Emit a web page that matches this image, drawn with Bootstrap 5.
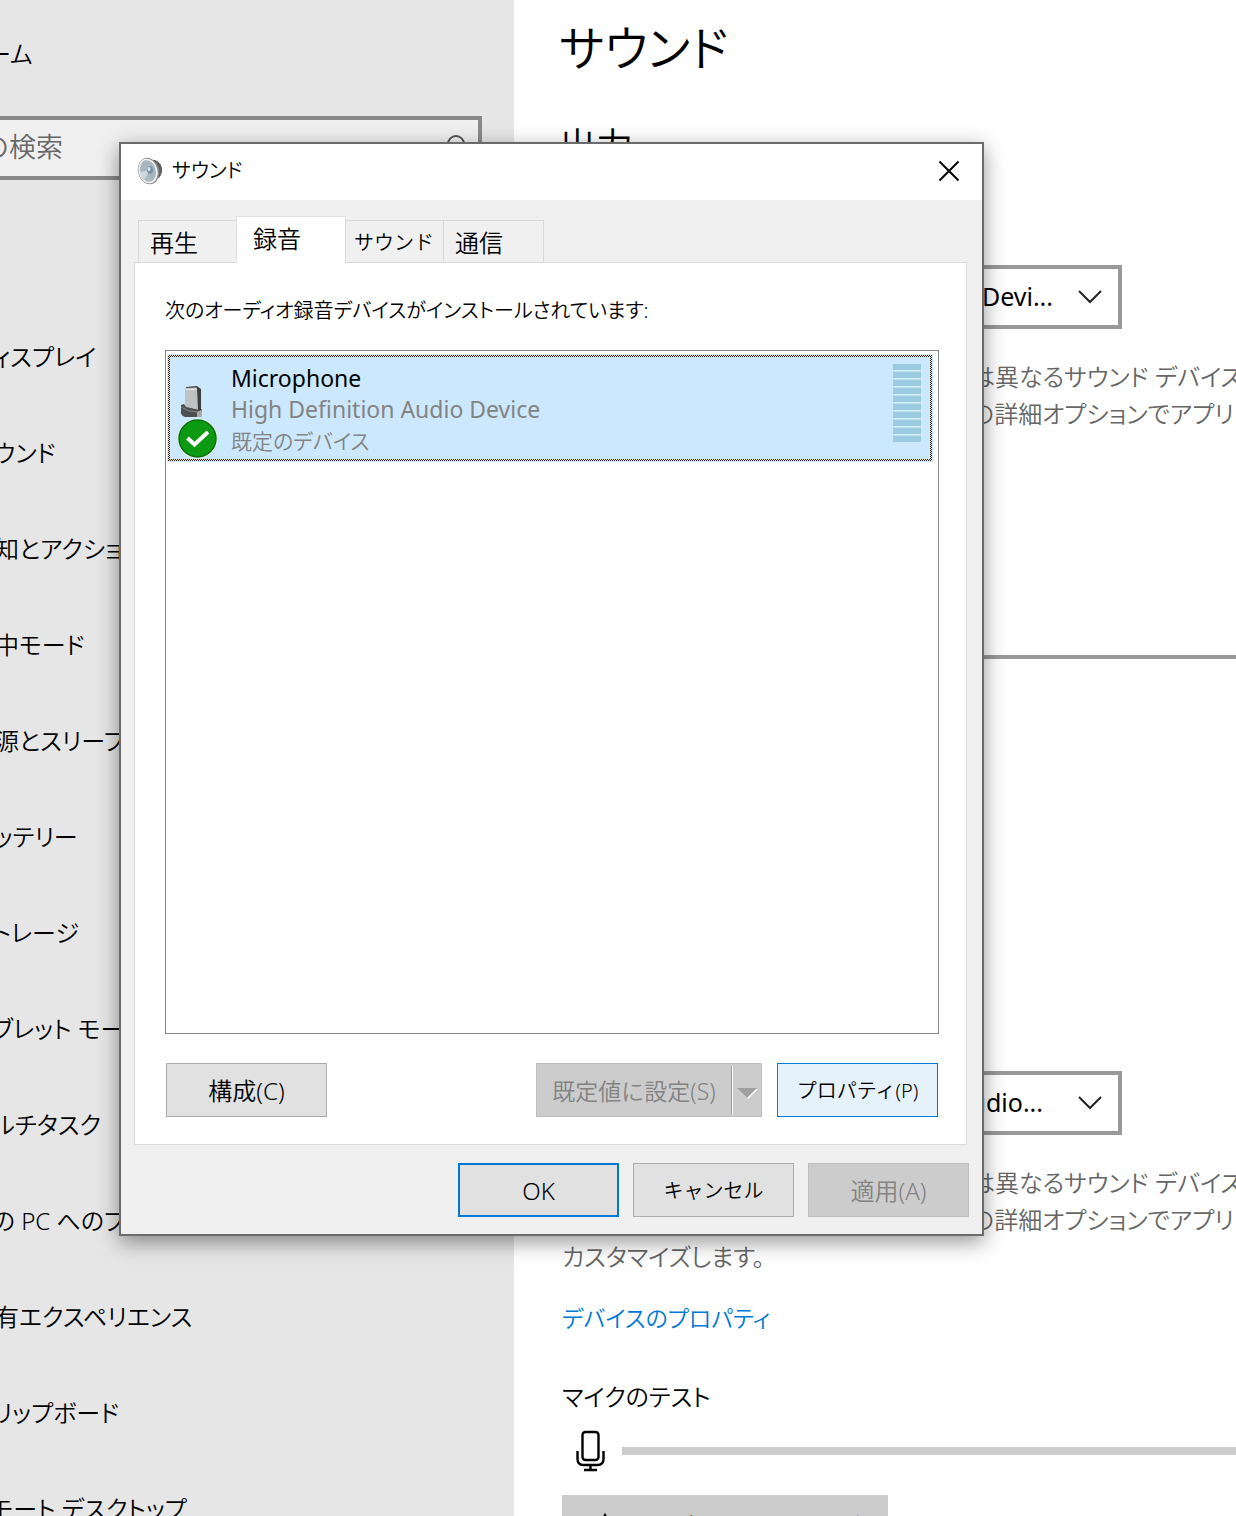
<!DOCTYPE html>
<html lang="ja">
<head>
<meta charset="utf-8">
<meta name="viewport" content="width=device-width, initial-scale=1">
<title>サウンド</title>
<link href="https://cdn.jsdelivr.net/npm/bootstrap@5.3.0/dist/css/bootstrap.min.css" rel="stylesheet">
<style>
body { font-family: "Noto Sans", "Noto Sans CJK JP", sans-serif; font-size: 24px; line-height: 38px; color: #000; background: #fff; font-feature-settings: "palt"; font-weight: 350; }
.settings { height: 100vh; }
.side { width: 514px; background: #e6e6e6; }
.side-home { height: 116px; padding-top: 35px; margin-left: -36px; }
.side a { color: #000; text-decoration: none; }
.search { width: 618px; height: 64px; margin-left: -136px; margin-bottom: 129px; border: 4px solid #898989; background: #f0f0f0; padding: 0 10px 2px 60px; }
.search input { background: transparent; border: 0; font-size: 27px; color: #666; outline: 0; padding: 0; font-weight: 350; }
.search input::placeholder { color: #666; }
.side-list a { display: flex; align-items: center; height: 96px; margin-left: -29px; white-space: nowrap; }
.pane { padding-left: 48px; min-width: 0; }
.pane h1 { font-size: 48px; line-height: 64px; padding-top: 16px; margin: 0 0 42px -3px; font-weight: 350; }
.pane h2 { font-size: 37px; line-height: 48px; font-weight: 350; margin: 0 0 0 -3px; }
.lbl { height: 95px; padding-top: 48px; }
.device { width: 560px; height: 64px; border: 4px solid #999; border-radius: 0; font-size: 25px; text-align-last: right; color: #000; padding: 0 65px 2px 12px; background-color: #fff; font-weight: 400; appearance: none; }
.device-b { padding-right: 75px; }
.picker { width: 560px; display: grid; }
.picker > * { grid-area: 1 / 1; }
.picker svg { justify-self: end; align-self: center; margin-right: 19px; pointer-events: none; }
.note { color: #666; margin: 29px 0 0; white-space: nowrap; line-height: 37px; }
.note-lead { width: 409px; overflow: hidden; flex: none; }
.vol { height: 210px; }
.vol-row { height: 44px; gap: 18px; }
.vol-row input { appearance: none; width: 680px; height: 4px; background: #999; flex: none; }
.vol-row input::-webkit-slider-thumb { appearance: none; width: 16px; height: 40px; border-radius: 8px; background: #0078d7; }
.mid { height: 201px; }
.prop { color: #0078d7; text-decoration: none; margin-top: 24px; display: block; font-size: 23px; }
.meter { height: 8px; background: #ccc; flex: 1; border-radius: 0; }
.mic-head { margin-top: 41px; }
.mic-row { height: 44px; gap: 17px; padding-left: 14px; margin-top: 13px; }
.fix { width: 326px; height: 64px; border: 0; background: #ccc; margin-top: 22px; padding: 0 0 0 28px; gap: 11px; font-weight: 350; font-size: 21px; }
.fix span { padding-bottom: 4px; }

.dlg { position: absolute; left: 119px; top: 142px; width: 865px; font-size: 24px; line-height: 32px; background: #f0f0f0; border: 2px solid #6b6b6b; box-shadow: 0 6px 20px rgba(0,0,0,.42); }
.dlg-title { height: 56px; background: #fff; padding: 0 15px 2px 14px; gap: 7px; }
.dlg-title h2 { font-size: 20px; line-height: 32px; margin: 0; font-weight: 350; }
.dlg button { font-size: 24px; font-weight: 350; color: #000; line-height: 32px; }
.dlg .x-btn { width: 36px; height: 44px; border: 0; background: none; }
.dlg-body { padding: 16px 13px 17px; }
.tabs { padding-left: 4px; border: 0; height: 47px; align-items: flex-end; margin-bottom: -1px; position: relative; }
.tabs .nav-link { width: 99px; height: 43px; margin: 0 -1px 0 0; padding: 2px 0 0 11px; border: 1px solid #d9d9d9; border-radius: 0; background: #f0f0f0; text-align: left; white-space: nowrap; }
.tabs .nav-link.kana { padding-left: 8px; }
.tabs .nav-link.last { width: 101px; }
.tabs .nav-link.active { width: 110px; height: 47px; padding: 6px 0 9px 16px; background: #fff; border-bottom-color: #fff; }
.dlg .kana { font-size: 20px; }
.sheet { background: #fff; border: 1px solid #dcdcdc; padding: 32px 27px 27px 30px; margin-right: 2px; }
.sheet p { margin: 0 0 23px; }
.devlist { height: 684px; border: 1px solid #828790; padding: 4px 6px 0 2px; }
.dev { height: 106px; border: 2px solid transparent; padding: 6px 9px 0 7px; background: linear-gradient(#cce8ff, #cce8ff) padding-box, repeating-conic-gradient(#222 0 25%, #ffe0c0 0 50%) 0 0 / 2px 2px border-box; box-shadow: 0 0 0 1px #cce8ff; }
.dev-text { line-height: 31px; color: #838383; margin-left: 12px; font-size: 23px; font-weight: 400; }
.dlg .dev-state { font-size: 21px; font-weight: 350; line-height: 33px; }
.bars { width: 28px; height: 78px; margin-top: 1px; background: repeating-linear-gradient(#9bcbe1 0 6px, #d4f0fa 6px 7px, #b9e0f2 7px 8px); }
.sheet-foot { margin-top: 29px; gap: 15px; padding: 0 1px; }
.dlg .cmd { width: 161px; height: 54px; border: 1px solid #adadad; border-radius: 0; background: #e1e1e1; padding: 2px 0 0; white-space: nowrap; }
.dlg .cmd:disabled, .dlg .split button:disabled { background: #ccc; border-color: #bfbfbf; color: #838383; opacity: 1; }
.dlg .cmd-hot { background: #e5f1fb; border-color: #0078d7; }
.dlg .cmd-ok { border: 2px solid #0078d7; }
.split { width: 226px; height: 54px; border: 1px solid #bfbfbf; background: #ccc; }
.dlg .split button { border: 0; border-radius: 0; padding: 2px 0 0; white-space: nowrap; font-size: 23px; }
.dlg .split .drop { width: 28px; padding: 0; }
.split-bar { width: 2px; height: 48px; background: linear-gradient(90deg, #a0a0a0 50%, #fff 50%); }
.dlg-foot { gap: 14px; padding: 18px 0 0; }
</style>
</head>
<body class="overflow-hidden">
<div class="settings d-flex overflow-hidden position-relative">
  <nav class="side flex-shrink-0 overflow-hidden">
    <div class="side-home"><a href="#">ホーム</a></div>
    <div class="search d-flex align-items-center">
      <input class="flex-grow-1" type="search" placeholder="設定の検索" aria-label="設定の検索">
      <svg width="28" height="28" viewBox="0 0 28 28" fill="none" stroke="#555" stroke-width="2"><circle cx="16" cy="11" r="8"/><path d="M10 17 2 25"/></svg>
    </div>
    <div class="side-list">
      <a href="#">ディスプレイ</a>
      <a href="#">サウンド</a>
      <a href="#">通知とアクション</a>
      <a href="#">集中モード</a>
      <a href="#">電源とスリープ</a>
      <a href="#">バッテリー</a>
      <a href="#">ストレージ</a>
      <a href="#">タブレット モード</a>
      <a href="#">マルチタスク</a>
      <a href="#">この PC へのプロジェクション</a>
      <a href="#">共有エクスペリエンス</a>
      <a href="#">クリップボード</a>
      <a href="#">リモート デスクトップ</a>
    </div>
  </nav>
  <main class="pane flex-grow-1 overflow-hidden">
    <h1>サウンド</h1>
    <h2>出力</h2>
    <label class="lbl d-block" for="out">出力デバイスを選択してください</label>
    <div class="picker">
      <select class="device" id="out"><option>スピーカー (High Definition Audio Devi...</option></select>
      <svg width="26" height="16" viewBox="0 0 26 16" fill="none" stroke="#222" stroke-width="2"><path d="M2 2 13 13 24 2"/></svg>
    </div>
    <div class="note">
      <div class="d-flex"><span class="note-lead">アプリによっては、ここで選択したものと</span><span>は異なるサウンド デバイスを</span></div>
      <div class="d-flex"><span class="note-lead">使用するよう設定できます。サウンド</span><span>の詳細オプションでアプリを</span></div>
      <div>カスタマイズします。</div>
    </div>
    <div class="vol d-flex flex-column justify-content-end">
      <label for="vol">マスター音量</label>
      <div class="vol-row d-flex align-items-center">
        <svg width="40" height="40" viewBox="0 0 40 40" fill="none" stroke="#000" stroke-width="2"><path d="M4 15h7l9-8v26l-9-8H4zM26 14q5 6 0 12M31 10q8 10 0 20"/></svg>
        <input type="range" id="vol" value="20">
      </div>
    </div>
    <div class="mid"></div>
    <h2>入力</h2>
    <label class="lbl d-block" for="in">入力デバイスを選択してください</label>
    <div class="mt-5 picker">
      <select class="device device-b" id="in"><option>Microphone (High Definition Audio...</option></select>
      <svg width="26" height="16" viewBox="0 0 26 16" fill="none" stroke="#222" stroke-width="2"><path d="M2 2 13 13 24 2"/></svg>
    </div>
    <div class="note">
      <div class="d-flex"><span class="note-lead">アプリによっては、ここで選択したものと</span><span>は異なるサウンド デバイスを</span></div>
      <div class="d-flex"><span class="note-lead">使用するよう設定できます。サウンド</span><span>の詳細オプションでアプリを</span></div>
      <div>カスタマイズします。</div>
    </div>
    <a class="prop" href="#">デバイスのプロパティ</a>
    <div class="mic-head">マイクのテスト</div>
    <div class="mic-row d-flex align-items-center">
      <svg width="29" height="42" viewBox="0 0 29 42" fill="none" stroke="#000" stroke-width="2.4"><rect x="6.500" y="2" width="16" height="28" rx="3"/><path d="M1.500 21v8q0 6 6 6h14q6 0 6-6v-8M14.500 35v5M8 40h13"/></svg>
      <div class="meter progress" role="progressbar" aria-label="マイクのテスト" aria-valuenow="0" aria-valuemin="0" aria-valuemax="100"></div>
    </div>
    <button class="fix d-flex align-items-center text-nowrap" type="button">
      <svg width="30" height="30" viewBox="0 0 30 30" fill="none" stroke="#000" stroke-width="2.200"><path d="M15 3 28 27H2zM15 11v8M15 21v3"/></svg>
      <span>トラブルシューティング</span>
    </button>
  </main>

  <section class="dlg" role="dialog" aria-labelledby="dlgTitle">
    <header class="dlg-title d-flex align-items-center">
      <svg width="30" height="30" viewBox="0 0 30 30"><path d="M14 4 20 4Q27 7 27 14T21 23L14 25Z" fill="#4b4d4e"/><path d="M22 5 24 22M25 8V19" stroke="#777" /><ellipse cx="13.500" cy="15" rx="10.500" ry="13.500" transform="rotate(-14 13.500 15)" fill="#8b8e90"/><ellipse cx="13" cy="15" rx="9.500" ry="12.500" transform="rotate(-14 13 15)" fill="#f3f3f3"/><ellipse cx="13" cy="15" rx="7.800" ry="11" transform="rotate(-14 13 15)" fill="#a9b7be"/><path d="M5 16 15 14 9 24Q5 22 5 16Z" fill="#cfd9dd"/><ellipse cx="15" cy="14" rx="3" ry="4" fill="#7893a5"/><ellipse cx="14" cy="13" rx="1.500" ry="2" fill="#d8e6ee"/></svg>
      <h2 id="dlgTitle" class="flex-grow-1">サウンド</h2>
      <button class="x-btn d-flex align-items-center justify-content-center p-0" type="button" aria-label="閉じる"><svg width="22" height="22" viewBox="0 0 22 22" stroke="#000" stroke-width="2"><path d="M1.500 1.500 20.500 20.500M20.500 1.500 1.500 20.500"/></svg></button>
    </header>
    <div class="dlg-body">
      <div class="tabs nav nav-tabs flex-nowrap" role="tablist">
        <button class="nav-link" type="button" role="tab">再生</button>
        <button class="nav-link active" type="button" role="tab" aria-selected="true">録音</button>
        <button class="nav-link kana" type="button" role="tab">サウンド</button>
        <button class="nav-link last" type="button" role="tab">通信</button>
      </div>
      <div class="sheet" role="tabpanel">
        <p class="kana">次のオーディオ録音デバイスがインストールされています:</p>
        <div class="devlist">
          <div class="dev d-flex align-items-start">
            <svg width="42" height="98" viewBox="0 0 42 98">
              <path d="M9 24 20 23 24 26V50H12Z" fill="#3c3f41"/><path d="M8 25 20 24.500 21 47 8 44Z" fill="#c0c1c2"/><path d="M9 26.500 19 26" stroke="#eee"/>
              <path d="M4 42 7 41 9 44 22 47 25 46V54H8Q3 52 4 48Z" fill="#4d4f51"/><path d="M4 44 12 48 21 49" stroke="#888" fill="none"/><path d="M20 49 25 47V54H20Z" fill="#aaa"/>
              <circle cx="20.500" cy="75.500" r="20" fill="#eef6ee"/><circle cx="20.500" cy="75.500" r="18.500" fill="#0b9a12"/><circle cx="20.500" cy="75.500" r="18.500" fill="none" stroke="#08700c" stroke-width="1.500"/><path d="M10.500 75 17.500 81.500 31 69" fill="none" stroke="#fff" stroke-width="4"/>
            </svg>
            <div class="dev-text flex-grow-1"><div class="text-black">Microphone</div><div>High Definition Audio Device</div><div class="dev-state">既定のデバイス</div></div>
            <div class="bars"></div>
          </div>
        </div>
        <div class="sheet-foot d-flex">
          <button class="cmd btn me-auto" type="button">構成(C)</button>
          <div class="split d-flex align-items-center">
            <button class="flex-grow-1" type="button" disabled>既定値に設定(S)</button>
            <span class="split-bar"></span>
            <button class="drop" type="button" disabled aria-label="メニュー"><svg width="22" height="14" viewBox="0 0 22 14"><path d="M2 3H22L12 13Z" fill="#fff"/><path d="M1 2H21L11 12Z" fill="#a0a0a0"/></svg></button>
          </div>
          <button class="cmd cmd-hot kana btn" type="button">プロパティ(P)</button>
        </div>
      </div>
      <div class="dlg-foot d-flex justify-content-end">
        <button class="cmd cmd-ok btn" type="button">OK</button>
        <button class="cmd kana btn" type="button">キャンセル</button>
        <button class="cmd btn" type="button" disabled>適用(A)</button>
      </div>
    </div>
  </section>
</div>
<script src="https://cdn.jsdelivr.net/npm/bootstrap@5.3.0/dist/js/bootstrap.bundle.min.js"></script>
</body>
</html>
